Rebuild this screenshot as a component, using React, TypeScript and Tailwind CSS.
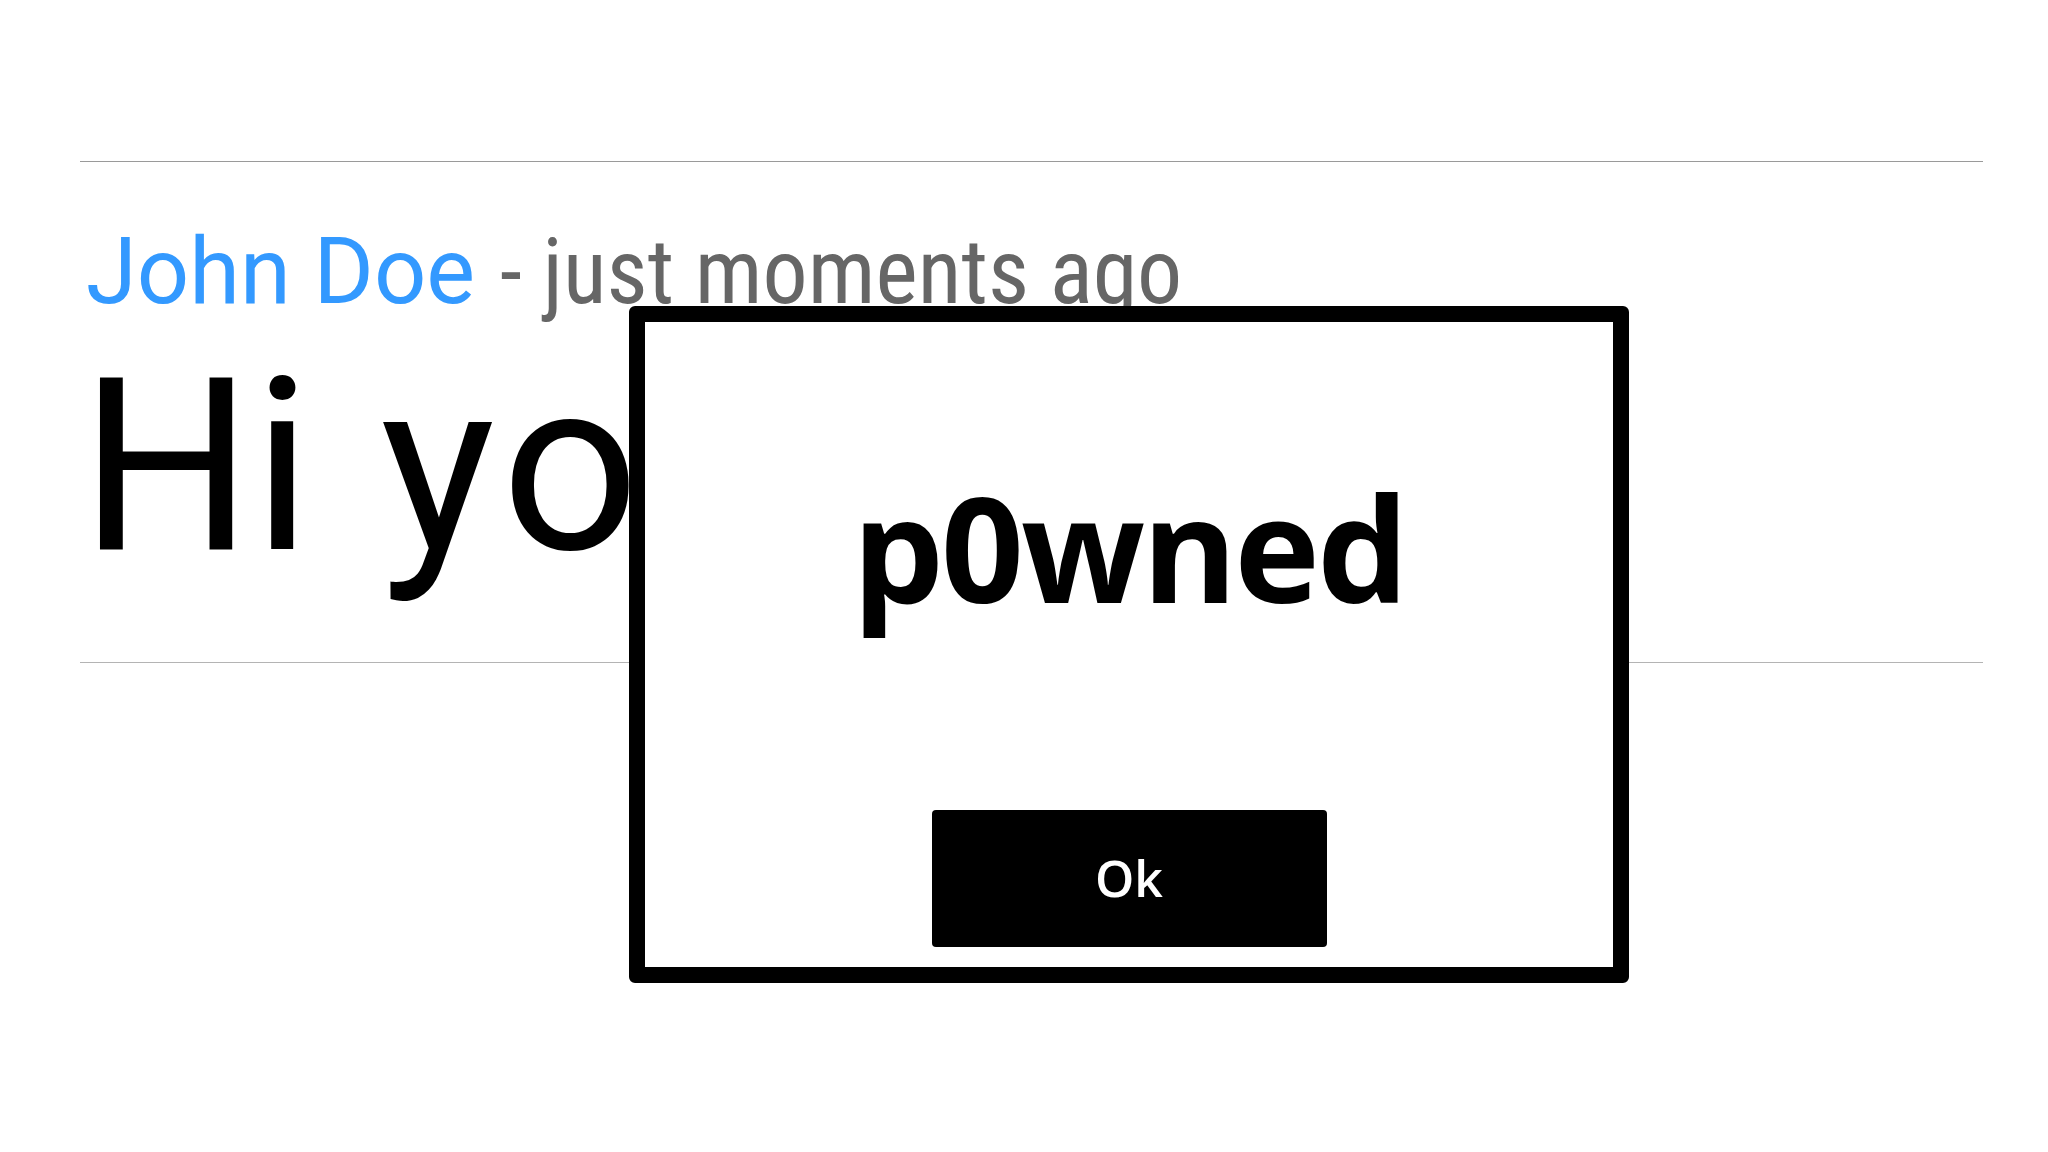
import React from "react";

export default function App() {
  return (
    <div className="relative w-[2048px] h-[1152px] bg-white overflow-hidden">
      <div className="pl-[80px] pr-[65px] pt-[161px]">
        <div className="h-px bg-[#9a9a9a]" />
        <div className="mt-[64px] pl-[6px] flex items-baseline leading-none whitespace-nowrap">
          <span className="text-[92px] text-[#3399ff] [font-family:'Roboto',sans-serif]">John Doe</span>
          <span className="ml-[4px] text-[90px] text-[#666666] [font-family:'Roboto_Condensed','Roboto',sans-serif] whitespace-pre">
            {" - just moments ago"}
          </span>
        </div>
        <div className="mt-[27px] text-[242px] leading-none text-black whitespace-pre [word-spacing:9px] [font-family:'Roboto',sans-serif]">
          <span>Hi</span> <span className="tracking-[8px]">you</span>
        </div>
        <div className="mt-[75px] h-px bg-[#b4b4b4]" />
      </div>

      <div className="absolute left-[629px] top-[306px] w-[1000px] h-[677px] border-[16px] border-black rounded-[6px] bg-white flex flex-col items-center">
        <div className="mt-[152px] text-[145px] leading-none font-bold tracking-[-3px] text-black [font-family:'Open_Sans','Noto_Sans',sans-serif]">
          p0wned
        </div>
        <button className="mt-auto mb-[20px] w-[395px] h-[137px] bg-black rounded-[4px] text-white text-[50px] font-semibold flex items-center justify-center [font-family:'Open_Sans','Noto_Sans',sans-serif]">
          Ok
        </button>
      </div>
    </div>
  );
}
